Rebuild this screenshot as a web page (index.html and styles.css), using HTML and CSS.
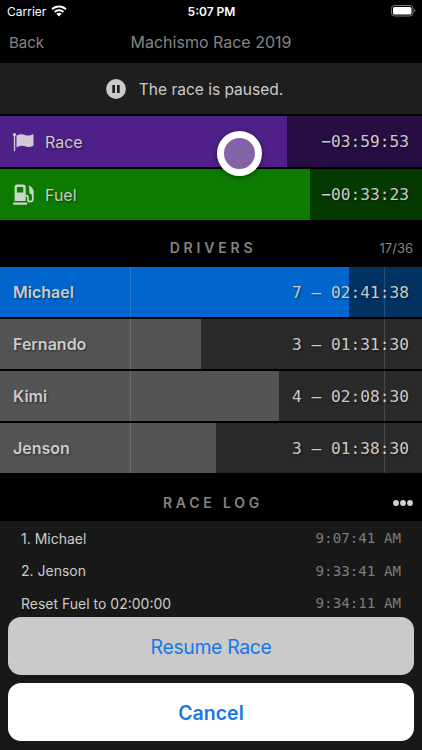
FILE: index.html
```
<!DOCTYPE html>
<html lang="en">
<head>
    <meta charset="UTF-8">
    <meta name="viewport" content="width=device-width, initial-scale=1.0">
    <title>Machismo Race 2019</title>
    <link rel="stylesheet" href="styles.css">
</head>
<body>
    <div class="status-bar">
        <div class="carrier">
            <span>Carrier</span>
            <svg width="16" height="12" viewBox="0 0 16 12" fill="#fff">
                <path d="M8 0.5C5 0.5 2.4 1.6 0.4 3.5L1.8 5C3.5 3.4 5.6 2.5 8 2.5s4.500.9 6.200 2.500L15.600 3.500C13.600 1.600 11 .5 8 .5z"/>
                <path d="M8 4.200c-2 0-3.700.7-5.100 2l1.400 1.500C5.300 6.700 6.600 6.200 8 6.200s2.700.5 3.700 1.500l1.400-1.500C11.700 4.900 10 4.200 8 4.200z"/>
                <path d="M8 7.800c-1 0-1.900.4-2.600 1L8 11.600l2.600-2.800C9.900 8.200 9 7.800 8 7.800z"/>
            </svg>
        </div>
        <div class="clock">5:07 PM</div>
        <svg class="battery" width="25" height="12" viewBox="0 0 25 12">
            <rect x="0.5" y="0.5" width="21.500" height="10.500" rx="3" fill="none" stroke="#777"/>
            <rect x="2" y="2" width="18.500" height="7.500" rx="1.600" fill="#fff"/>
            <path d="M23.300 4v3.600c.8-.3 1.200-1 1.200-1.800s-.4-1.500-1.200-1.800z" fill="#777"/>
        </svg>
    </div>
    <header>
        <a class="back">Back</a>
        <h1>Machismo Race 2019</h1>
        <span></span>
    </header>
    <div class="banner">
        <svg width="20" height="20" viewBox="0 0 20 20">
            <circle cx="10" cy="10" r="9.900" fill="#cbcbcb"/>
            <path d="M6.300 6h2.700v8H6.300zM11 6h2.700v8H11z" fill="#1e1e1e"/>
        </svg>
        <span>The race is paused.</span>
    </div>

    <div class="timers">
        <div class="bar race">
            <div class="fill" style="width: 67.900%"></div>
            <svg class="icon" width="22" height="22" viewBox="0 0 22 22" fill="#cfcbd5">
                <circle cx="1.500" cy="3.500" r="1.600"/>
                <path d="M0.800 3.500h1.400v16.700H0.800z"/>
                <path d="M3.500 4.300C5.500 3.600 7.100 3 8.900 3.200c2.400.3 3.900 1.500 6.200 1.400 1.800-.1 3.300-.6 4.700-1.300.4-.2.7 0 .7.500v10.400c0 .4-.2.700-.6.900-1.600.8-3 1.100-4.700 1-2.300-.2-3.900-1.400-6.200-1.300-2 .1-3.600.7-5.500 1.600z"/>
            </svg>
            <span class="label">Race</span>
            <span class="time">−03:59:53</span>
        </div>
        <div class="bar fuel">
            <div class="fill" style="width: 73.500%"></div>
            <svg class="icon" width="22" height="22" viewBox="0 0 22 22" fill="#cbd5c9">
                <path fill-rule="evenodd" d="M1.600 17V3c0-1.500.9-2.400 2.400-2.400h6.300c1.500 0 2.400.9 2.400 2.400v14zM3.900 4v4.600h6.400V4c0-.6-.3-1-1-1H4.900c-.7 0-1 .4-1 1z"/>
                <rect x="0" y="18.500" width="14.300" height="2.300" rx="0.800"/>
                <path d="M12 11.600h1.200c1.200 0 1.700.7 1.700 1.900v1.900c0 1.500.7 2.300 2.200 2.300s2.700-1 2.700-2.700V7.500c0-1.400-.5-2.200-1.500-3.200L15.900 2" fill="none" stroke="#cbd5c9" stroke-width="1.700"/>
                <path d="M16 3l3.900 3.500v4.800l-2.400-1.200c-.7-.4-1-.9-1-1.700z"/>
            </svg>
            <span class="label">Fuel</span>
            <span class="time">−00:33:23</span>
        </div>
    </div>

    <div class="section-title drivers-title">
        <span></span>
        <h2>DRIVERS</h2>
        <span class="count">17/36</span>
    </div>
    <div class="drivers">
        <div class="bar driver active">
            <div class="fill" style="width: 82.800%"></div>
            <span class="name">Michael</span>
            <span class="time">7 – 02:41:38</span>
        </div>
        <div class="bar driver">
            <div class="fill" style="width: 47.600%"></div>
            <span class="name">Fernando</span>
            <span class="time">3 – 01:31:30</span>
        </div>
        <div class="bar driver">
            <div class="fill" style="width: 66.200%"></div>
            <span class="name">Kimi</span>
            <span class="time">4 – 02:08:30</span>
        </div>
        <div class="bar driver">
            <div class="fill" style="width: 51.200%"></div>
            <span class="name">Jenson</span>
            <span class="time">3 – 01:38:30</span>
        </div>
    </div>

    <div class="section-title log-title">
        <span></span>
        <h2>RACE LOG</h2>
        <svg class="more" width="20" height="6" viewBox="0 0 20 6" fill="#d4d4d4">
            <circle cx="3" cy="3" r="2.900"/>
            <circle cx="10" cy="3" r="2.900"/>
            <circle cx="17" cy="3" r="2.900"/>
        </svg>
    </div>
    <div class="log">
        <div class="entry"><span>1. Michael</span><span class="entry-time">9:07:41 AM</span></div>
        <div class="entry"><span>2. Jenson</span><span class="entry-time">9:33:41 AM</span></div>
        <div class="entry"><span>Reset Fuel to 02:00:00</span><span class="entry-time">9:34:11 AM</span></div>
    </div>

    <!-- Action sheet -->
    <div class="sheet">
        <button class="resume">Resume Race</button>
        <button class="cancel">Cancel</button>
    </div>

    <!-- Touch indicator -->
    <div class="touch"></div>
</body>
</html>
```
FILE: styles.css
```
* {
    box-sizing: border-box;
}

body {
    margin: 0;
    height: 750px;
    overflow: hidden;
    position: relative;
    display: flex;
    flex-direction: column;
    background-color: #000;
    color: #cbcbcb;
    font-family: Inter, "Liberation Sans", sans-serif;
    font-size: 16px;
}

h1, h2 {
    margin: 0;
}

.status-bar {
    display: grid;
    grid-template-columns: 1fr auto 1fr;
    align-items: center;
    height: 22px;
    padding: 0 6px 0 7px;
    color: #fff;
    font-size: 12px;
}

.carrier {
    display: flex;
    align-items: center;
    gap: 5px;
}

.clock {
    font-weight: 600;
}

.battery {
    justify-self: end;
}

header {
    display: grid;
    grid-template-columns: 1fr auto 1fr;
    align-items: center;
    height: 41px;
    padding: 0 9px 2px;
    color: #858585;
}

.back {
    padding-top: 1px;
    font-size: 15px;
}

h1 {
    font-size: 16px;
    font-weight: 400;
}

.banner {
    display: flex;
    align-items: center;
    justify-content: center;
    gap: 13px;
    height: 51px;
    padding-top: 1px;
    padding-right: 33px;
    background-color: #1e1e1e;
    font-size: 15.5px;
}

.timers {
    margin-top: 2px;
    display: flex;
    flex-direction: column;
    gap: 2px;
}

.bar {
    position: relative;
    display: flex;
    align-items: center;
    height: 51px;
    padding: 0 13px;
    text-shadow: 1px 1px 2px rgba(0, 0, 0, 0.5);
}

.fill {
    position: absolute;
    top: 0;
    left: 0;
    height: 100%;
}

.icon, .label, .name, .time {
    position: relative;
}

.label {
    margin-left: 10px;
}

.time {
    margin-left: auto;
    font-family: "DejaVu Sans Mono", monospace;
    font-size: 16.2px;
    white-space: pre;
}

.race {
    background-color: #260e43;
}

.race .fill {
    background-color: #4e2088;
}

.fuel {
    background-color: #043a00;
}

.fuel .fill {
    background-color: #0c7b00;
}

.section-title {
    display: grid;
    grid-template-columns: 1fr auto 1fr;
    align-items: center;
    padding: 0 9px;
}

.drivers-title {
    height: 47px;
    padding-top: 8px;
}

.log-title {
    height: 48px;
    padding-top: 11px;
}

h2 {
    margin-right: -4px;
    color: #858585;
    font-size: 14px;
    font-weight: 600;
    letter-spacing: 3.8px;
}

.count {
    justify-self: end;
    color: #858585;
    font-size: 13px;
}

.more {
    justify-self: end;
}

.drivers {
    display: flex;
    flex-direction: column;
    gap: 2px;
}

.driver {
    height: 50px;
    background-color: #2a2a2a;
}

.driver .fill {
    background-color: #545454;
}

/* Minimum and maximum stint markers */
.driver::after {
    content: "";
    position: absolute;
    top: 0;
    bottom: 0;
    left: 130px;
    width: 253px;
    border: solid rgba(255, 255, 255, 0.15);
    border-width: 0 1px;
}

.active {
    background-color: #003262;
}

.active .fill {
    background-color: #0066cd;
}

.name {
    font-weight: 600;
}

.log {
    flex: 1;
    padding: 1px 21px 0;
    background-color: #181818;
}

.entry {
    display: flex;
    align-items: center;
    justify-content: space-between;
    height: 32.6px;
    font-size: 14px;
}

.entry-time {
    color: #7d7d7d;
    font-family: "DejaVu Sans Mono", monospace;
    font-size: 14.2px;
}

.sheet {
    position: absolute;
    left: 8px;
    right: 8px;
    bottom: 9px;
    display: flex;
    flex-direction: column;
    gap: 8px;
}

.sheet button {
    height: 58px;
    padding: 1px 0 0;
    border: none;
    border-radius: 13px;
    color: #1877e8;
    font-family: inherit;
    font-size: 19.5px;
}

.sheet .resume {
    background-color: #cacaca;
    letter-spacing: -0.4px;
}

.sheet .cancel {
    background-color: #fff;
    font-weight: 600;
}

.touch {
    position: absolute;
    top: 131px;
    left: 217px;
    width: 45px;
    height: 45px;
    border: 7px solid #fff;
    border-radius: 50%;
    background-color: #8263a8;
    box-shadow: 0 1px 5px rgba(0, 0, 0, 0.5);
}
```
